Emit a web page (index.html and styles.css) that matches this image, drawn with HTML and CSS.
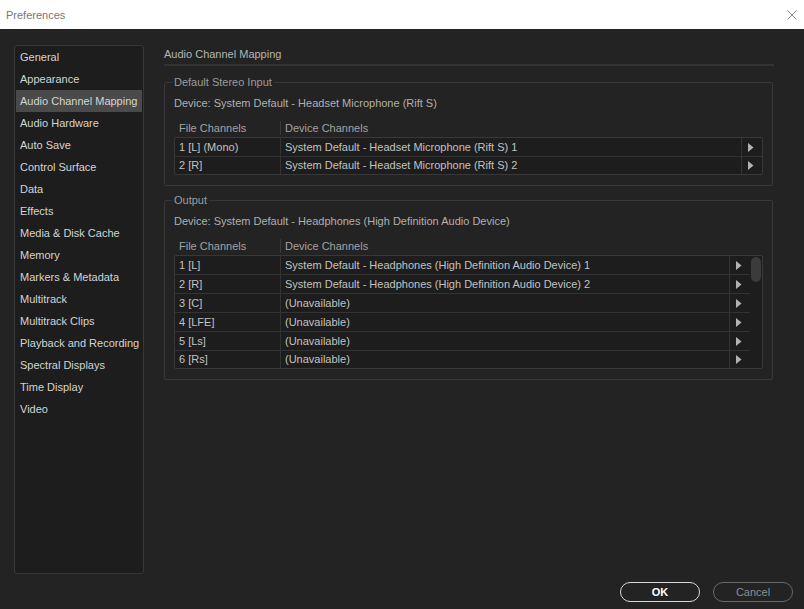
FILE: index.html
```html
<!DOCTYPE html>
<html lang="en">
<head>
<meta charset="utf-8">
<title>Preferences</title>
<link rel="stylesheet" href="styles.css">
</head>
<body>
<header class="titlebar">
  <span class="title">Preferences</span>
  <svg class="close" width="10" height="10" viewBox="0 0 10 10"><path d="M0.5 0.5L9.5 9.5M9.5 0.5L0.5 9.5" stroke="#8a8a8a" stroke-width="1" fill="none"/></svg>
</header>
<div class="content">
  <nav class="sidebar">
    <div class="nav-item">General</div>
    <div class="nav-item">Appearance</div>
    <div class="nav-item active">Audio Channel Mapping</div>
    <div class="nav-item">Audio Hardware</div>
    <div class="nav-item">Auto Save</div>
    <div class="nav-item">Control Surface</div>
    <div class="nav-item">Data</div>
    <div class="nav-item">Effects</div>
    <div class="nav-item">Media &amp; Disk Cache</div>
    <div class="nav-item">Memory</div>
    <div class="nav-item">Markers &amp; Metadata</div>
    <div class="nav-item">Multitrack</div>
    <div class="nav-item">Multitrack Clips</div>
    <div class="nav-item">Playback and Recording</div>
    <div class="nav-item">Spectral Displays</div>
    <div class="nav-item">Time Display</div>
    <div class="nav-item">Video</div>
  </nav>
  <section class="panel">
    <h1 class="panel-title">Audio Channel Mapping</h1>
    <fieldset class="group">
      <legend>Default Stereo Input</legend>
      <div class="device">Device: System Default - Headset Microphone (Rift S)</div>
      <div class="thead"><div class="th-file">File Channels</div><div class="th-dev">Device Channels</div></div>
      <div class="table">
        <div class="rows">
          <div class="row"><div class="c-file">1 [L] (Mono)</div><div class="c-dev">System Default - Headset Microphone (Rift S) 1</div><div class="c-arrow"><svg width="6" height="9" viewBox="0 0 6 9"><path d="M0 0L5.5 4.5L0 9Z" fill="#b2b2b2"/></svg></div></div>
          <div class="row"><div class="c-file">2 [R]</div><div class="c-dev">System Default - Headset Microphone (Rift S) 2</div><div class="c-arrow"><svg width="6" height="9" viewBox="0 0 6 9"><path d="M0 0L5.5 4.5L0 9Z" fill="#b2b2b2"/></svg></div></div>
        </div>
      </div>
    </fieldset>
    <fieldset class="group group-out">
      <legend>Output</legend>
      <div class="device">Device: System Default - Headphones (High Definition Audio Device)</div>
      <div class="thead"><div class="th-file">File Channels</div><div class="th-dev">Device Channels</div></div>
      <div class="table">
        <div class="rows">
          <div class="row"><div class="c-file">1 [L]</div><div class="c-dev">System Default - Headphones (High Definition Audio Device) 1</div><div class="c-arrow"><svg width="6" height="9" viewBox="0 0 6 9"><path d="M0 0L5.5 4.5L0 9Z" fill="#b2b2b2"/></svg></div></div>
          <div class="row"><div class="c-file">2 [R]</div><div class="c-dev">System Default - Headphones (High Definition Audio Device) 2</div><div class="c-arrow"><svg width="6" height="9" viewBox="0 0 6 9"><path d="M0 0L5.5 4.5L0 9Z" fill="#b2b2b2"/></svg></div></div>
          <div class="row"><div class="c-file">3 [C]</div><div class="c-dev">(Unavailable)</div><div class="c-arrow"><svg width="6" height="9" viewBox="0 0 6 9"><path d="M0 0L5.5 4.5L0 9Z" fill="#b2b2b2"/></svg></div></div>
          <div class="row"><div class="c-file">4 [LFE]</div><div class="c-dev">(Unavailable)</div><div class="c-arrow"><svg width="6" height="9" viewBox="0 0 6 9"><path d="M0 0L5.5 4.5L0 9Z" fill="#b2b2b2"/></svg></div></div>
          <div class="row"><div class="c-file">5 [Ls]</div><div class="c-dev">(Unavailable)</div><div class="c-arrow"><svg width="6" height="9" viewBox="0 0 6 9"><path d="M0 0L5.5 4.5L0 9Z" fill="#b2b2b2"/></svg></div></div>
          <div class="row"><div class="c-file">6 [Rs]</div><div class="c-dev">(Unavailable)</div><div class="c-arrow"><svg width="6" height="9" viewBox="0 0 6 9"><path d="M0 0L5.5 4.5L0 9Z" fill="#b2b2b2"/></svg></div></div>
        </div>
        <div class="scrollbar"><div class="thumb"></div></div>
      </div>
    </fieldset>
  </section>
</div>
<footer class="footer">
  <button class="btn btn-ok">OK</button>
  <button class="btn btn-cancel">Cancel</button>
</footer>
</body>
</html>
```
FILE: styles.css
```css
* { box-sizing: border-box; }
html, body { margin: 0; padding: 0; }
body {
  width: 804px;
  height: 609px;
  overflow: hidden;
  background: #232323;
  font-family: "Liberation Sans", Arial, sans-serif;
  font-size: 11px;
}
.titlebar {
  height: 29px;
  background: #ffffff;
  display: flex;
  align-items: center;
  justify-content: space-between;
  padding: 0 7px 0 6px;
}
.title { color: #777777; font-size: 11px; }
.close { display: block; }

.content {
  display: flex;
  align-items: flex-start;
  padding: 16px 0 0 14px;
}
.sidebar {
  width: 130px;
  height: 529px;
  border: 1px solid #383838;
  border-radius: 3px;
  background: #1d1d1d;
}
.nav-item {
  height: 22px;
  line-height: 22px;
  margin: 0 1px;
  padding-left: 4px;
  color: #d4d4d4;
  white-space: nowrap;
}
.nav-item.active { background: #4a4a4a; }

.panel {
  width: 610px;
  margin-left: 20px;
}
.panel-title {
  margin: 0;
  font-size: 11px;
  font-weight: normal;
  height: 21px;
  line-height: 19px;
  border-bottom: 2px solid #333333;
  color: #b4b4b4;
}
.group {
  margin: 8px 1px 0 0;
  padding: 5px 9px 10px 9px;
  border: 1px solid #383838;
  border-radius: 2px;
  min-width: 0;
}
.group-out { margin-top: 6px; }
.group legend {
  padding: 0 2px;
  margin-left: -2px;
  line-height: 16px;
  color: #9c9c9c;
}
.device {
  line-height: 16px;
  color: #b0b0b0;
}
.thead {
  display: flex;
  align-items: center;
  height: 19px;
  margin-top: 7px;
  color: #a2a2a2;
}
.th-file { width: 106px; padding-left: 5px; }
.th-dev {
  border-left: 1px solid #3a3a3a;
  padding-left: 4px;
  height: 14px;
  line-height: 14px;
}
.table {
  display: flex;
  border: 1px solid #383838;
  border-radius: 2px;
  background: #1d1d1d;
}
.rows { flex: 1; }
.row {
  display: flex;
  height: 19px;
  line-height: 18px;
  border-bottom: 1px solid #333333;
  color: #c2c2c2;
}
.row:last-child {
  border-bottom: none;
  height: 17px;
  line-height: 17px;
}
.c-file {
  width: 106px;
  padding-left: 4px;
  border-right: 1px solid #333333;
}
.c-dev {
  flex: 1;
  padding-left: 4px;
  border-right: 1px solid #333333;
  white-space: nowrap;
}
.c-arrow {
  width: 20px;
  display: flex;
  align-items: center;
  padding-left: 6px;
}
.c-arrow svg { display: block; }
.scrollbar {
  width: 12px;
  padding: 1px 1px 0 1px;
}
.thumb {
  height: 25px;
  border-radius: 5px;
  background: #3b3b3b;
}

.footer {
  display: flex;
  justify-content: flex-end;
  gap: 13px;
  padding-right: 11px;
  margin-top: 8px;
}
.btn {
  width: 80px;
  height: 20px;
  border-radius: 10px;
  background: transparent;
  font-family: "Liberation Sans", Arial, sans-serif;
  font-size: 11px;
  padding: 0;
  display: flex;
  align-items: center;
  justify-content: center;
}
.btn-ok {
  border: 1px solid #d8d8d8;
  color: #ffffff;
  font-weight: bold;
}
.btn-cancel {
  border: 1px solid #6a6a6a;
  color: #8e8e8e;
}
```
